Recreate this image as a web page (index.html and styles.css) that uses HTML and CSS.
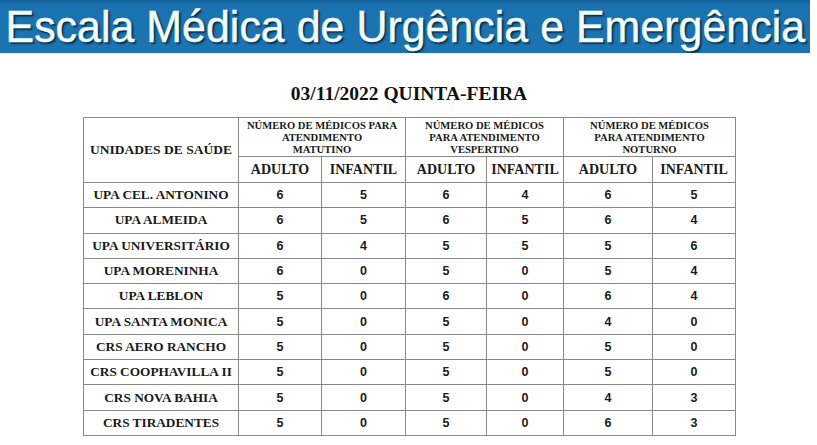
FILE: index.html
```html
<!DOCTYPE html>
<html lang="pt-BR">
<head>
<meta charset="utf-8">
<title>Escala Médica de Urgência e Emergência</title>
<link rel="stylesheet" href="styles.css">
</head>
<body>
<header class="banner"><h1>Escala Médica de Urgência e Emergência</h1></header>
<main class="content">
<h2 class="date">03/11/2022 QUINTA-FEIRA</h2>
<table class="grid">
<colgroup>
<col class="c-unit"><col class="c1"><col class="c2"><col class="c3"><col class="c4"><col class="c5"><col class="c6">
</colgroup>
<thead>
<tr class="group">
<th rowspan="2" class="unit-h">UNIDADES DE SAÚDE</th>
<th colspan="2" class="shift">NÚMERO DE MÉDICOS PARA<br>ATENDIMENTO<br>MATUTINO</th>
<th colspan="2" class="shift">NÚMERO DE MÉDICOS<br>PARA ATENDIMENTO<br>VESPERTINO</th>
<th colspan="2" class="shift">NÚMERO DE MÉDICOS<br>PARA ATENDIMENTO<br>NOTURNO</th>
</tr>
<tr class="sub">
<th>ADULTO</th><th>INFANTIL</th><th>ADULTO</th><th>INFANTIL</th><th>ADULTO</th><th>INFANTIL</th>
</tr>
</thead>
<tbody>
<tr><th>UPA CEL. ANTONINO</th><td>6</td><td>5</td><td>6</td><td>4</td><td>6</td><td>5</td></tr>
<tr><th>UPA ALMEIDA</th><td>6</td><td>5</td><td>6</td><td>5</td><td>6</td><td>4</td></tr>
<tr><th>UPA UNIVERSITÁRIO</th><td>6</td><td>4</td><td>5</td><td>5</td><td>5</td><td>6</td></tr>
<tr><th>UPA MORENINHA</th><td>6</td><td>0</td><td>5</td><td>0</td><td>5</td><td>4</td></tr>
<tr><th>UPA LEBLON</th><td>5</td><td>0</td><td>6</td><td>0</td><td>6</td><td>4</td></tr>
<tr><th>UPA SANTA MONICA</th><td>5</td><td>0</td><td>5</td><td>0</td><td>4</td><td>0</td></tr>
<tr><th>CRS AERO RANCHO</th><td>5</td><td>0</td><td>5</td><td>0</td><td>5</td><td>0</td></tr>
<tr><th>CRS COOPHAVILLA II</th><td>5</td><td>0</td><td>5</td><td>0</td><td>5</td><td>0</td></tr>
<tr><th>CRS NOVA BAHIA</th><td>5</td><td>0</td><td>5</td><td>0</td><td>4</td><td>3</td></tr>
<tr><th>CRS TIRADENTES</th><td>5</td><td>0</td><td>5</td><td>0</td><td>6</td><td>3</td></tr>
</tbody>
</table>
</main>
</body>
</html>
```
FILE: styles.css
```css
html, body {
  margin: 0;
  padding: 0;
  background: #ffffff;
}
.banner {
  width: 810px;
  height: 53px;
  background: linear-gradient(#14629b 0px, #1b72b1 5px, #1c74b3 100%);
  display: flex;
  align-items: center;
  justify-content: center;
  overflow: hidden;
}
.banner h1 {
  margin: 0;
  font-family: "Liberation Sans", Arial, sans-serif;
  font-weight: normal;
  font-size: 44.5px;
  line-height: 1;
  color: #effdff;
  white-space: nowrap;
  -webkit-text-stroke: 0.5px #effdff;
  text-shadow: 1px 1px 1px #0a2a40, 2px 2px 2px #0d3550;
  transform: translateY(1px) scaleX(0.965);
}
.content {
  display: flex;
  flex-direction: column;
  align-items: flex-start;
  padding-left: 83px;
}
.date {
  width: 652px;
  margin: 30px 0 0;
  font-family: "Liberation Serif", "Times New Roman", serif;
  font-weight: bold;
  font-size: 19.5px;
  line-height: 22px;
  text-align: center;
  color: #111;
}
.grid {
  margin-top: 12px;
  border-collapse: collapse;
  table-layout: fixed;
  width: 653px;
  border: 1.5px solid #808080;
  color: #1a1a1a;
}
.c-unit { width: 155px; }
.c1 { width: 83px; }
.c2 { width: 84px; }
.c3 { width: 81px; }
.c4 { width: 77px; }
.c5 { width: 89px; }
.c6 { width: 83px; }
.grid th, .grid td {
  border: 1px solid #8a8a8a;
  padding: 0;
  text-align: center;
  vertical-align: middle;
}
.grid th {
  font-family: "Liberation Serif", "Times New Roman", serif;
  font-weight: bold;
}
.unit-h {
  font-size: 13.5px;
}
.group th.shift {
  height: 37px;
  font-size: 10.6px;
  line-height: 12px;
  padding-top: 1px;
}
.sub th {
  height: 25px;
  font-size: 14px;
}
tbody th {
  height: 24.3px;
  font-size: 13.3px;
  white-space: nowrap;
}
tbody td {
  font-family: "Liberation Sans", Arial, sans-serif;
  font-weight: bold;
  font-size: 12.5px;
}
```
